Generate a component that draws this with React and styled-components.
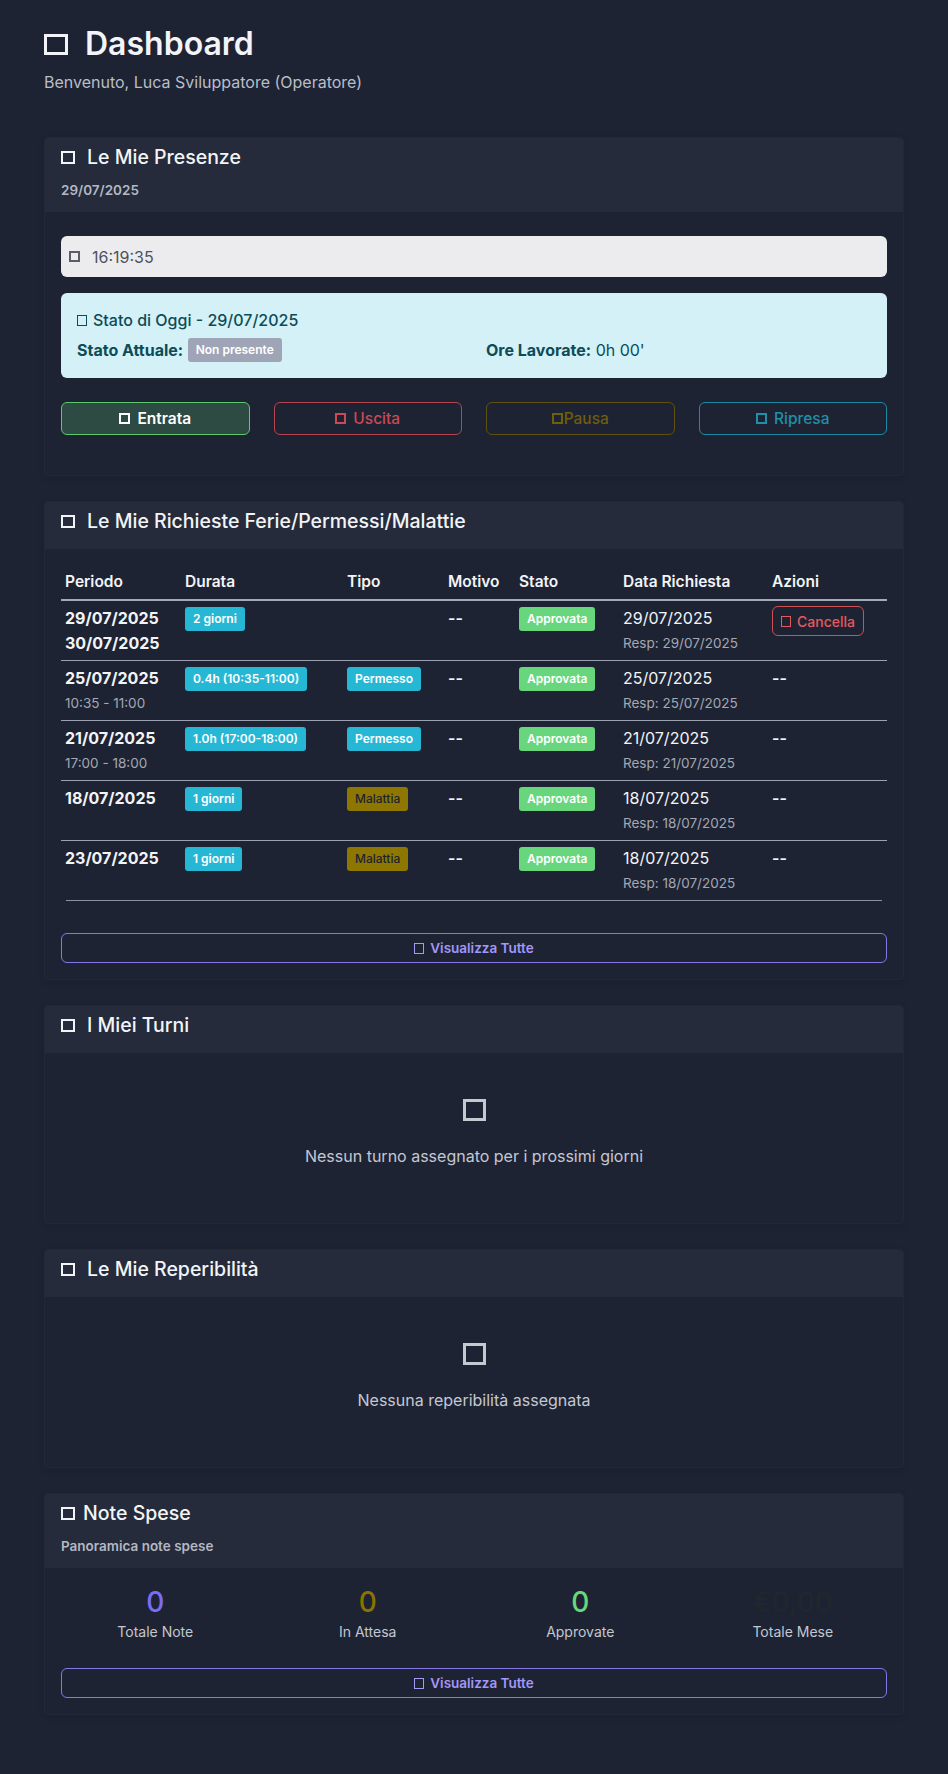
import React from 'react'
import styled, { createGlobalStyle } from 'styled-components'

const GlobalStyle = createGlobalStyle`
    * { box-sizing: border-box; }
    body {
        margin: 0;
        background: #1e2333;
        font-family: Inter, "Noto Sans", "Liberation Sans", sans-serif;
        color: #eef0f4;
    }
`

const requests = [
    { from: '29/07/2025', to: '30/07/2025', durata: '2 giorni', data: '29/07/2025', resp: '29/07/2025', cancel: true },
    { from: '25/07/2025', hours: '10:35 - 11:00', durata: '0.4h (10:35-11:00)', tipo: 'Permesso', data: '25/07/2025', resp: '25/07/2025' },
    { from: '21/07/2025', hours: '17:00 - 18:00', durata: '1.0h (17:00-18:00)', tipo: 'Permesso', data: '21/07/2025', resp: '21/07/2025' },
    { from: '18/07/2025', durata: '1 giorni', tipo: 'Malattia', data: '18/07/2025', resp: '18/07/2025' },
    { from: '23/07/2025', durata: '1 giorni', tipo: 'Malattia', data: '18/07/2025', resp: '18/07/2025' },
]

const columns = [
    ['Periodo', 120], ['Durata', 162], ['Tipo', 101], ['Motivo', 71],
    ['Stato', 104], ['Data Richiesta', 149], ['Azioni', 119],
]

const stats = [
    { value: '0', label: 'Totale Note', color: '#7b6cf6' },
    { value: '0', label: 'In Attesa', color: '#8a7400' },
    { value: '0', label: 'Approvate', color: '#68d67c' },
    { value: '€0,00', label: 'Totale Mese', color: '#22262d' },
]

function App() {
    return (
        <>
            <GlobalStyle />
            <Page>
                <PageTitle><Tofu $w={24} $h={21} $b={3} /> Dashboard</PageTitle>
                <Welcome>Benvenuto, Luca Sviluppatore (Operatore)</Welcome>

                <Card>
                    <CardHeader>
                        <CardTitle><Tofu $w={14} $h={13} $b={2} />Le Mie Presenze</CardTitle>
                        <CardSub>29/07/2025</CardSub>
                    </CardHeader>
                    <PresenceBody>
                        <Clock><Tofu $w={11} $h={11} $b={2} />16:19:35</Clock>
                        <StatusBox>
                            <StatusTitle><Tofu $w={10} $h={11} $b={1.5} />Stato di Oggi - 29/07/2025</StatusTitle>
                            <StatusGrid>
                                <div><b>Stato Attuale:</b> <GrayBadge>Non presente</GrayBadge></div>
                                <div><b>Ore Lavorate:</b> 0h 00'</div>
                            </StatusGrid>
                        </StatusBox>
                        <ActionRow>
                            <ActionButton $border="#5bc96e" $color="#ffffff" $bg="#2d4a43" $weight={600}>
                                <Tofu $w={11} $h={11} $b={2} />Entrata
                            </ActionButton>
                            <ActionButton $border="#b5464f" $color="#c84a54">
                                <Tofu $w={11} $h={11} $b={2} />Uscita
                            </ActionButton>
                            <ActionButton $border="#5e5010" $color="#6f5e0c" $tight>
                                <Tofu $w={11} $h={11} $b={2} />Pausa
                            </ActionButton>
                            <ActionButton $border="#1b8ba3" $color="#1f90aa">
                                <Tofu $w={11} $h={11} $b={2} />Ripresa
                            </ActionButton>
                        </ActionRow>
                    </PresenceBody>
                </Card>

                <Card>
                    <CardHeader>
                        <CardTitle><Tofu $w={14} $h={13} $b={2} />Le Mie Richieste Ferie/Permessi/Malattie</CardTitle>
                    </CardHeader>
                    <TableBody>
                        <Table>
                            <colgroup>
                                {columns.map(([name, w]) => <col key={name} style={{ width: w }} />)}
                            </colgroup>
                            <thead>
                                <tr>{columns.map(([name]) => <Th key={name}>{name}</Th>)}</tr>
                            </thead>
                            <tbody>
                                {requests.map((r, i) => (
                                    <Tr key={i} $last={i === requests.length - 1}>
                                        <Td>
                                            <DateStrong>{r.from}</DateStrong>
                                            {r.to && <DateStrong>{r.to}</DateStrong>}
                                            {r.hours && <Muted>{r.hours}</Muted>}
                                        </Td>
                                        <Td><Badge $bg="#26b7d5">{r.durata}</Badge></Td>
                                        <Td>{r.tipo && (
                                            r.tipo === 'Malattia'
                                                ? <Badge $bg="#8d7700" $color="#1e2333" $weight={500}>{r.tipo}</Badge>
                                                : <Badge $bg="#26b7d5">{r.tipo}</Badge>
                                        )}</Td>
                                        <Td><Dash>--</Dash></Td>
                                        <Td><Badge $bg="#68d67c">Approvata</Badge></Td>
                                        <Td>
                                            <DatePlain>{r.data}</DatePlain>
                                            <Muted>Resp: {r.resp}</Muted>
                                        </Td>
                                        <Td>
                                            {r.cancel
                                                ? <CancelButton><Tofu $w={10} $h={11} $b={1.5} />Cancella</CancelButton>
                                                : <Dash>--</Dash>}
                                        </Td>
                                    </Tr>
                                ))}
                            </tbody>
                        </Table>
                        <TableEnd />
                        <OutlineButton><Tofu $w={10} $h={11} $b={1.5} />Visualizza Tutte</OutlineButton>
                    </TableBody>
                </Card>

                <Card>
                    <CardHeader>
                        <CardTitle><Tofu $w={14} $h={13} $b={2} />I Miei Turni</CardTitle>
                    </CardHeader>
                    <Empty>
                        <Tofu $w={23} $h={22} $b={3} />
                        <EmptyText>Nessun turno assegnato per i prossimi giorni</EmptyText>
                    </Empty>
                </Card>

                <Card>
                    <CardHeader>
                        <CardTitle><Tofu $w={14} $h={13} $b={2} />Le Mie Reperibilità</CardTitle>
                    </CardHeader>
                    <Empty>
                        <Tofu $w={23} $h={22} $b={3} />
                        <EmptyText>Nessuna reperibilità assegnata</EmptyText>
                    </Empty>
                </Card>

                <Card>
                    <CardHeader>
                        <CardTitle $gap={8}><Tofu $w={14} $h={13} $b={2} />Note Spese</CardTitle>
                        <CardSub>Panoramica note spese</CardSub>
                    </CardHeader>
                    <ExpenseBody>
                        <StatGrid>
                            {stats.map(s => (
                                <Stat key={s.label}>
                                    <StatValue $color={s.color}>{s.value}</StatValue>
                                    <StatLabel>{s.label}</StatLabel>
                                </Stat>
                            ))}
                        </StatGrid>
                        <OutlineButton><Tofu $w={10} $h={11} $b={1.5} />Visualizza Tutte</OutlineButton>
                    </ExpenseBody>
                </Card>
            </Page>
        </>
    )
}

export default App

const Page = styled.div`
    padding: 24px 44px 57px;
    min-height: 100vh;
`

const Tofu = styled.span`
    display: inline-block;
    flex-shrink: 0;
    width: ${p => p.$w}px;
    height: ${p => p.$h}px;
    border: ${p => p.$b}px solid currentColor;
`

const PageTitle = styled.h1`
    display: flex;
    align-items: center;
    gap: 17px;
    margin: 0 0 6px;
    font-size: 32px;
    line-height: 40px;
    font-weight: 600;
    color: #f2f4f7;
`

const Welcome = styled.p`
    margin: 0 0 43px;
    font-size: 16px;
    line-height: 24px;
    color: #b9bdc8;
`

const Card = styled.section`
    background: #1e2333;
    border: 1px solid #222838;
    border-radius: 4px;
    margin-bottom: 25px;
    overflow: hidden;
    box-shadow: 0 2px 6px rgba(0, 0, 0, 0.12);
`

const CardHeader = styled.div`
    background: #252b3a;
    padding: 7px 16px 12px;
`

const CardTitle = styled.h2`
    display: flex;
    align-items: center;
    gap: ${p => p.$gap || 12}px;
    margin: 0 0 4px;
    font-size: 19.5px;
    line-height: 24px;
    font-weight: 500;
    color: #f2f4f7;
`

const CardSub = styled.div`
    margin-top: 11px;
    font-size: 13.5px;
    line-height: 20px;
    font-weight: 600;
    color: #b3b8c3;
`

const PresenceBody = styled.div`
    padding: 24px 16px;
`

const Clock = styled.div`
    display: flex;
    align-items: center;
    gap: 12px;
    height: 41px;
    padding: 0 8px;
    background: #ececef;
    border-radius: 6px;
    font-size: 16px;
    color: #4d525c;
    > span { color: #5a5e66; }
`

const StatusBox = styled.div`
    margin-top: 16px;
    padding: 16px 16px;
    background: #d3f1f7;
    border-radius: 6px;
    color: #0d4b57;
`

const StatusTitle = styled.div`
    display: flex;
    align-items: center;
    gap: 6px;
    font-size: 16px;
    line-height: 22px;
    font-weight: 500;
    margin-bottom: 7px;
`

const StatusGrid = styled.div`
    display: grid;
    grid-template-columns: 1fr 1fr;
    column-gap: 24px;
    font-size: 16px;
    line-height: 24px;
    b { font-weight: 700; }
`

const GrayBadge = styled.span`
    display: inline-block;
    padding: 0 8px;
    line-height: 24px;
    border-radius: 3px;
    background: #9fa4b7;
    color: #ffffff;
    font-size: 12px;
    font-weight: 600;
    vertical-align: top;
`

const ActionRow = styled.div`
    display: grid;
    grid-template-columns: repeat(4, 1fr);
    gap: 24px;
    margin: 24px 0 16px;
`

const ActionButton = styled.button`
    display: flex;
    align-items: center;
    justify-content: center;
    gap: ${p => (p.$tight ? 1 : 7)}px;
    height: 33px;
    border: 1px solid ${p => p.$border};
    border-radius: 6px;
    background: ${p => p.$bg || 'transparent'};
    color: ${p => p.$color};
    font-family: inherit;
    font-size: 15.5px;
    font-weight: ${p => p.$weight || 500};
`

const TableBody = styled.div`
    padding: 16px 16px 16px;
`

const Table = styled.table`
    width: 100%;
    table-layout: fixed;
    border-collapse: collapse;
`

const Th = styled.th`
    text-align: left;
    padding: 5px 4px;
    font-size: 15.5px;
    line-height: 24px;
    font-weight: 600;
    color: #f2f4f7;
    border-bottom: 2px solid #a3abbb;
`

const Tr = styled.tr`
    border-bottom: ${p => (p.$last ? 'none' : '1px solid #9aa2b2')};
`

const Td = styled.td`
    vertical-align: top;
    padding: 5px 4px;
    height: 59px;
    font-size: 16px;
    line-height: 24.5px;
    color: #f2f4f7;
`

const DateStrong = styled.div`
    font-weight: 700;
`

const DatePlain = styled.div`
    font-weight: 400;
`

const Muted = styled.div`
    font-size: 13.5px;
    color: #a3a8b3;
`

const Dash = styled.span`
    font-weight: 600;
`

const Badge = styled.span`
    display: inline-block;
    margin-top: 1px;
    padding: 0 8px;
    line-height: 24px;
    border-radius: 3px;
    background: ${p => p.$bg};
    color: ${p => p.$color || '#ffffff'};
    font-size: 12px;
    font-weight: ${p => p.$weight || 600};
    vertical-align: top;
`

const CancelButton = styled.button`
    display: inline-flex;
    align-items: center;
    gap: 6px;
    height: 30px;
    padding: 0 8px;
    border: 1px solid #cf4f55;
    border-radius: 6px;
    background: transparent;
    color: #e35a5f;
    font-family: inherit;
    font-size: 14px;
    font-weight: 500;
`

const TableEnd = styled.div`
    margin: 0 5px 32px;
    border-top: 1px solid #8a92a2;
`

const OutlineButton = styled.button`
    display: flex;
    align-items: center;
    justify-content: center;
    gap: 6px;
    width: 100%;
    height: 30px;
    border: 1px solid #8676e6;
    border-radius: 6px;
    background: transparent;
    color: #a497f6;
    font-family: inherit;
    font-size: 13.5px;
    font-weight: 600;
`

const Empty = styled.div`
    display: flex;
    flex-direction: column;
    align-items: center;
    padding: 46px 16px 55px;
    color: #c4c8d1;
`

const EmptyText = styled.p`
    margin: 23px 0 0;
    font-size: 16px;
    line-height: 24px;
    color: #c4c8d1;
`

const ExpenseBody = styled.div`
    padding: 17px 16px 16px;
`

const StatGrid = styled.div`
    display: grid;
    grid-template-columns: repeat(4, 1fr);
    margin: 0 -12px 26px;
`

const Stat = styled.div`
    text-align: center;
`

const StatValue = styled.div`
    font-size: 28px;
    line-height: 34px;
    font-weight: 500;
    color: ${p => p.$color};
`

const StatLabel = styled.div`
    margin-top: 3px;
    font-size: 14px;
    line-height: 20px;
    color: #c3c7d0;
`
